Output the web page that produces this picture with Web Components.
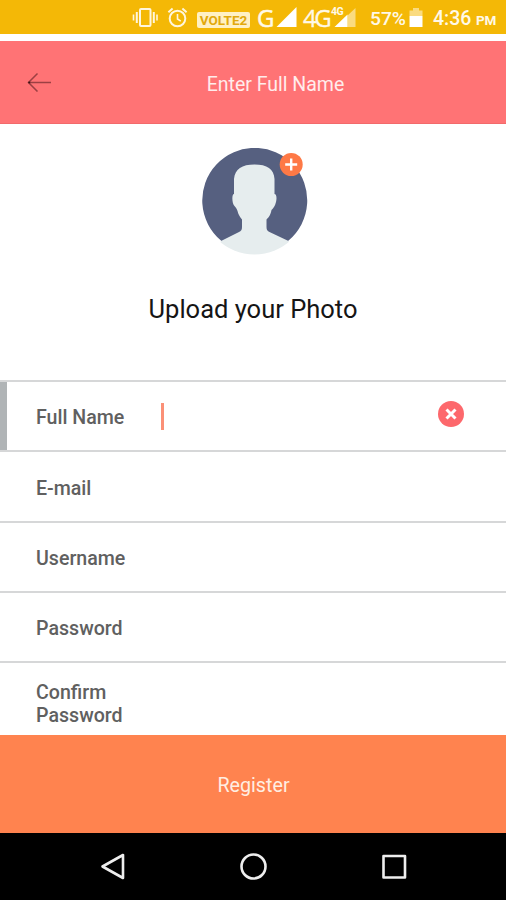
<!DOCTYPE html>
<html lang="en">
<head>
<meta charset="utf-8">
<title>Register</title>
<style>
    body {
        margin: 0;
        width: 506px;
        height: 900px;
        overflow: hidden;
        background: #fff;
        font-family: Roboto, "Liberation Sans", sans-serif;
    }
</style>
</head>
<body>
<register-screen></register-screen>

<script>
function makeTemplate(html) {
    const template = document.createElement('template');
    template.innerHTML = html;
    return template;
}

const statusTemplate = makeTemplate(`
    <style>
        :host {
            display: flex;
            align-items: flex-start;
            height: 34px;
            box-sizing: border-box;
            padding-left: 132px;
            background: #f4b806;
            color: #fff9e8;
            white-space: nowrap;
        }
        svg { display: block; flex: none; height: 34px; }
        span { flex: none; line-height: 22px; }
        .volte {
            width: 53px;
            height: 16px;
            margin: 12px 0 0 9px;
            border-radius: 2px;
            background: #fff1c4;
            color: #e2a90c;
            font-size: 13.5px;
            font-weight: 700;
            line-height: 17px;
            text-align: center;
        }
        .g { width: 19px; margin: 7px 0 0 7px; font: 24px/22px "Open Sans", sans-serif; -webkit-text-stroke: 0.5px; }
        .lte { width: 27px; margin: 7px 0 0 6px; font: 24px/22px "Open Sans", sans-serif; letter-spacing: -2.5px; -webkit-text-stroke: 0.3px; }
        .percent { width: 39px; margin: 8px 0 0 13px; font-size: 19.2px; font-weight: 500; }
        .clock { width: 43px; margin: 8px 0 0 10px; font-size: 19.5px; font-weight: 500; }
        .pm { margin: 9px 0 0 0; font-size: 13.5px; font-weight: 700; letter-spacing: -0.3px; }
        .cell { display: flex; flex-direction: column; width: 27px; height: 34px; }
        .cell span { height: 11px; margin: 6px 0 0 1px; font-size: 10.5px; font-weight: 700; line-height: 12px; letter-spacing: -0.5px; }
        .cell svg { height: 17px; overflow: visible; }
    </style>
    <svg width="27" viewBox="0 0 27 34" fill="none" stroke="#fff6dc" stroke-width="2">
        <rect x="8" y="9" width="10.5" height="17" rx="1"/>
        <path d="M4.8 12v11M21.8 12v11"/>
        <path d="M1.5 14.5v6M25 14.5v6" stroke-width="1.6"/>
    </svg>
    <svg width="29" viewBox="0 0 29 34" fill="none" stroke="#fff6dc" stroke-width="2">
        <circle cx="18.5" cy="18.5" r="7.8"/>
        <path d="M18.5 14v5l3.3 2.2" stroke-width="1.6"/>
        <path d="M9.4 12.2l4.2-3.6M27.6 12.2l-4.2-3.6"/>
    </svg>
    <span class="volte">VOLTE2</span>
    <span class="g">G</span>
    <svg width="21" viewBox="0 0 21 34"><path d="M.5 27L20.5 7v20z" fill="#fff"/></svg>
    <span class="lte">4G</span>
    <div class="cell">
        <span>4G</span>
        <svg width="27" viewBox="0 0 27 17">
            <path d="M17.5 -1.5L25.5 -9v19h-8z" fill="#fadb80"/>
            <path d="M4.5 10L17.5 -2.5V10z" fill="#fff"/>
        </svg>
    </div>
    <span class="percent">57%</span>
    <svg width="14" viewBox="0 0 14 34">
        <path d="M.5 10.5H4V8h6v2.5h3.5V16H.5z" fill="#fadb80"/>
        <path d="M.5 16h13v11H.5z" fill="#fff"/>
    </svg>
    <span class="clock">4:36</span>
    <span class="pm">PM</span>
`);

class StatusBar extends HTMLElement {
    constructor() {
        super();
        this.attachShadow({ mode: 'open' }).appendChild(statusTemplate.content.cloneNode(true));
    }
}

const headerTemplate = makeTemplate(`
    <style>
        :host {
            display: grid;
            grid-template-columns: 80px 1fr 35px;
            align-items: center;
            height: 83px;
            box-sizing: border-box;
            margin-top: 7px;
            border-bottom: 1px solid #f26a6b;
            background: #ff7375;
            color: #ffecec;
        }
        svg { margin-left: 27px; display: block; }
        h1 { margin: 4px 0 0; font-size: 19.5px; font-weight: 400; text-align: center; }
    </style>
    <svg width="26" height="20" viewBox="0 0 26 20" fill="none" stroke="#9c4043" stroke-width="1.5">
        <path d="M1.5 10.5H24M10.5 1.5L1.5 10.5l9 9"/>
        <circle cx="2.2" cy="10.5" r="1" fill="#3c1012" stroke="none"/>
    </svg>
    <h1><slot></slot></h1>
`);

class AppHeader extends HTMLElement {
    constructor() {
        super();
        this.attachShadow({ mode: 'open' }).appendChild(headerTemplate.content.cloneNode(true));
    }
}

const photoTemplate = makeTemplate(`
    <style>
        :host {
            display: flex;
            flex-direction: column;
            align-items: center;
            height: 256px;
            box-sizing: border-box;
            padding-top: 24px;
            color: #151515;
        }
        svg { display: block; margin-left: 4px; }
        p { margin: 37px 0 0; font-size: 25.5px; line-height: 32px; }
    </style>
    <svg width="108" height="108" viewBox="0 0 108 108">
        <defs><clipPath id="disc"><circle cx="53.5" cy="53.5" r="53"/></clipPath></defs>
        <path d="M20.5 93A52.5 52.5 0 1 1 87 93z" fill="#566080"/>
        <path clip-path="url(#disc)" fill="#e6edee" d="M53.5 16.5
            C41 16.5 34 21 33 31 V46 C30.5 46 31 56 33.5 58 C35 60 36 61 36.5 63
            C37.5 67 39 69 41 71.5 V79 C41 82 40 83 38 84 L20 93 L10 108 H98 L87.5 93
            L68.500 84 C66.500 83 65.500 82 65.500 79 V71.5 C68 69 69.5 67 70.5 62 C72.5 60 74 58 75 54
            C76 50 75.5 46 73.5 46 V31 C73 21 66 16.5 53.5 16.5z"/>
        <circle cx="90.2" cy="16.5" r="11.5" fill="#fe7946"/>
        <path d="M90.2 10.5v12M84.2 16.5h12" stroke="#fff" stroke-width="2.4"/>
    </svg>
    <p><slot></slot></p>
`);

class PhotoUpload extends HTMLElement {
    constructor() {
        super();
        this.attachShadow({ mode: 'open' }).appendChild(photoTemplate.content.cloneNode(true));
    }
}

const fieldTemplate = makeTemplate(`
    <style>
        :host {
            display: flex;
            align-items: center;
            height: 70.3px;
            box-sizing: border-box;
            padding: 4px 42px 0 36px;
            border-top: 2px solid #d6d7d8;
            color: #606060;
        }
        :host([active]) {
            background: linear-gradient(90deg, #b0b4b6 7.5px, transparent 7.5px);
        }
        :host([tall]) { padding-top: 14px; }
        label { width: 125px; font-size: 19.6px; font-weight: 500; line-height: 23.4px; }
        .caret, svg { display: none; }
        :host([active]) .caret { display: block; width: 3px; height: 27px; margin-top: -4px; background: #fb9077; }
        :host([active]) svg { display: block; margin: -9px 0 0 auto; }
    </style>
    <label><slot></slot></label>
    <div class="caret"></div>
    <svg width="26" height="26" viewBox="0 0 26 26">
        <circle cx="13" cy="13" r="13" fill="#fd686c"/>
        <path d="M8.5 8.5l9 9M17.5 8.5l-9 9" stroke="#fff" stroke-width="3"/>
    </svg>
`);

class FormField extends HTMLElement {
    constructor() {
        super();
        this.attachShadow({ mode: 'open' }).appendChild(fieldTemplate.content.cloneNode(true));
    }
}

const buttonTemplate = makeTemplate(`
    <style>
        :host { display: block; height: 98px; }
        button {
            display: block;
            width: 100%;
            height: 100%;
            padding: 2px 0 0 1px;
            border: 0;
            background: #ff834f;
            color: #ffeee2;
            font: inherit;
            font-size: 19.7px;
        }
    </style>
    <button type="button"><slot></slot></button>
`);

class RegisterButton extends HTMLElement {
    constructor() {
        super();
        this.attachShadow({ mode: 'open' }).appendChild(buttonTemplate.content.cloneNode(true));
    }
}

const navTemplate = makeTemplate(`
    <style>
        :host {
            display: flex;
            justify-content: center;
            align-items: center;
            gap: 112px;
            height: 67px;
            background: #000;
        }
        svg { display: block; }
    </style>
    <svg width="28" height="28" viewBox="0 0 28 28" fill="none" stroke="#eee" stroke-width="2.6" stroke-linejoin="round"><path d="M24 2v23L3.5 13.5z"/></svg>
    <svg width="28" height="28" viewBox="0 0 28 28" fill="none" stroke="#eee" stroke-width="2.6"><circle cx="14.5" cy="13.5" r="12"/></svg>
    <svg width="28" height="28" viewBox="0 0 28 28" fill="none" stroke="#eee" stroke-width="2.6" stroke-linejoin="round"><path d="M4.5 3h21.5v21.5H4.5z"/></svg>
`);

class NavBar extends HTMLElement {
    constructor() {
        super();
        this.attachShadow({ mode: 'open' }).appendChild(navTemplate.content.cloneNode(true));
    }
}

const screenTemplate = makeTemplate(`
    <style>
        :host { display: flex; flex-direction: column; height: 900px; }
        main { flex: 1; min-height: 0; overflow: hidden; }
        status-bar, app-header, register-button, nav-bar { flex: none; }
    </style>
    <status-bar></status-bar>
    <app-header>Enter Full Name</app-header>
    <main>
        <photo-upload>Upload your Photo</photo-upload>
        <form-field active>Full Name</form-field>
        <form-field>E-mail</form-field>
        <form-field>Username</form-field>
        <form-field>Password</form-field>
        <form-field tall>Confirm Password</form-field>
    </main>
    <register-button>Register</register-button>
    <nav-bar></nav-bar>
`);

class RegisterScreen extends HTMLElement {
    constructor() {
        super();
        this.attachShadow({ mode: 'open' }).appendChild(screenTemplate.content.cloneNode(true));
    }
}

customElements.define('status-bar', StatusBar);
customElements.define('app-header', AppHeader);
customElements.define('photo-upload', PhotoUpload);
customElements.define('form-field', FormField);
customElements.define('register-button', RegisterButton);
customElements.define('nav-bar', NavBar);
customElements.define('register-screen', RegisterScreen);
</script>
</body>
</html>
